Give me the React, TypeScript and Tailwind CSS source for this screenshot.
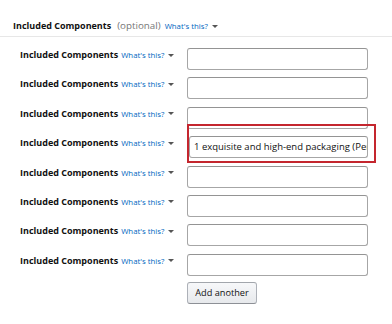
import React from "react";

const Arrow = () => (
  <span className="inline-block ml-[4px] w-0 h-0 border-l-[3px] border-r-[3px] border-t-[3px] border-l-transparent border-r-transparent border-t-[#555] self-center" />
);

const Row = ({ value }: { value?: string }) => (
  <div className="flex items-start h-[22px]">
    <div className="w-[167px] flex items-baseline pt-[0px] leading-[14px] whitespace-nowrap">
      <span className="text-[9px] font-bold text-[#111]">Included Components</span>
      <span className="ml-[3px] text-[7.8px] text-[#0066c0]">What's this?</span>
      <Arrow />
    </div>
    <div
      className={
        "h-[22px] border border-[#a6a6a6] border-t-[#949494] rounded-[3px] bg-white flex items-center overflow-hidden whitespace-nowrap " +
        (value ? "pl-[4px] ml-[2px] w-[179px]" : "w-[181px]")
      }
    >
      {value && <span className="text-[9.5px] text-[#111]">{value}</span>}
    </div>
  </div>
);

export default function App() {
  return (
    <div
      className="w-[392px] h-[324px] bg-white relative overflow-hidden"
      style={{ fontFamily: '"Open Sans", "Noto Sans", sans-serif' }}
    >
      <div className="pt-[18px] pl-[13px] pb-[2px] border-b border-[#e7e7e7] flex items-baseline leading-[15px] whitespace-nowrap">
        <span className="text-[9px] font-bold text-[#111]">Included Components</span>
        <span className="ml-[6px] text-[9.8px] text-[#767676]">(optional)</span>
        <span className="ml-[4px] text-[7.8px] text-[#0066c0]">What's this?</span>
        <Arrow />
      </div>
      <div className="pl-[20px] pt-[11px] flex flex-col gap-[7.4px]">
        <Row />
        <Row />
        <Row />
        <Row value="1 exquisite and high-end packaging (Personalized gift box)" />
        <Row />
        <Row />
        <Row />
        <Row />
        <div className="pl-[167px] flex -mt-[1px]">
          <button className="h-[22px] w-[70px] rounded-[3px] border border-[#adb1b8] border-t-[#a2a6ac] border-b-[#8d9096] bg-gradient-to-b from-[#f7f8fa] to-[#e7e9ec] text-[9.2px] text-[#111]">
            Add another
          </button>
        </div>
      </div>
      <div className="absolute left-[187px] top-[124px] w-[189px] h-[39px] border-2 border-[#c4262e]" />
    </div>
  );
}
